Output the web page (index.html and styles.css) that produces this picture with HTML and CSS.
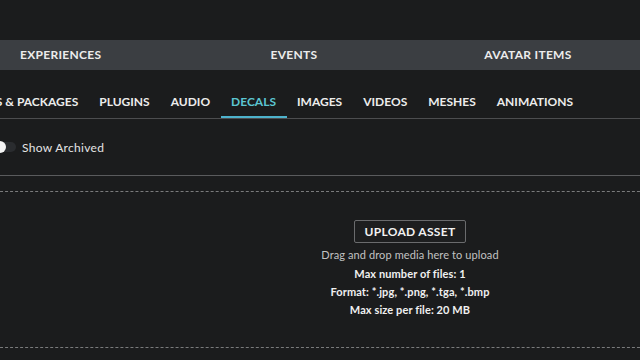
FILE: index.html
```html
<html lang="en">
  <head>
    <meta charset="UTF-8" />
    <meta name="viewport" content="width=device-width, initial-scale=1.0" />
    <title>Creations - Decals</title>
    <link rel="stylesheet" href="styles.css">
  </head>
  <body>
    <div class="top-strip"></div>
    <nav class="category-nav">
      <div class="category">EXPERIENCES</div>
      <div class="category">EVENTS</div>
      <div class="category">AVATAR ITEMS</div>
    </nav>
    <div class="asset-tabs">
      <div class="tab">MODELS &amp; PACKAGES</div>
      <div class="tab">PLUGINS</div>
      <div class="tab">AUDIO</div>
      <div class="tab active">DECALS</div>
      <div class="tab">IMAGES</div>
      <div class="tab">VIDEOS</div>
      <div class="tab">MESHES</div>
      <div class="tab">ANIMATIONS</div>
    </div>
    <div class="filter-row">
      <span class="toggle"><span class="knob"></span></span>
      <span class="filter-label">Show Archived</span>
    </div>
    <div class="dropzone">
      <button class="upload-btn">UPLOAD ASSET</button>
      <p class="hint">Drag and drop media here to upload</p>
      <p class="rule">Max number of files: 1</p>
      <p class="rule">Format: *.jpg, *.png, *.tga, *.bmp</p>
      <p class="rule">Max size per file: 20 MB</p>
    </div>
  </body>
</html>
```

FILE: styles.css
```css
body {
  margin: 0;
  background-color: #1b1c1d;
  font-family: Lato, "Open Sans", sans-serif;
  color: #ececec;
  overflow: hidden;
}

.top-strip {
  height: 40px;
}

.category-nav {
  display: flex;
  height: 30px;
  background-color: #3b3e42;
}

.category {
  flex: none;
  width: 234px;
  line-height: 30px;
  text-align: center;
  font-size: 12px;
  font-weight: 700;
  letter-spacing: 0.3px;
}

.category:first-child {
  width: 177px;
  text-align: left;
  padding-left: 20px;
  box-sizing: border-box;
}

.asset-tabs {
  display: flex;
  align-items: flex-end;
  height: 48px;
  margin-left: -58px;
  border-bottom: 1px solid #4c4d4f;
}

.tab {
  flex: none;
  padding: 0 10.5px;
  line-height: 28px;
  border-bottom: 2px solid transparent;
  font-size: 12px;
  font-weight: 700;
  white-space: nowrap;
}

.tab.active {
  color: #5cc6d2;
  border-bottom-color: #4db2cc;
}

.filter-row {
  display: flex;
  align-items: center;
  height: 56px;
  border-bottom: 1px solid #5a5b5d;
}

.toggle {
  position: relative;
  width: 16px;
  height: 10px;
  border-radius: 0 5px 5px 0;
  background-color: #2a2c2f;
}

.knob {
  position: absolute;
  left: -6px;
  top: -1px;
  width: 12px;
  height: 12px;
  border-radius: 50%;
  background-color: #f4f4f4;
}

.filter-label {
  margin-left: 6px;
  font-size: 12px;
  color: #e4e4e4;
  letter-spacing: 0.3px;
}

.dropzone {
  display: flex;
  flex-direction: column;
  align-items: center;
  height: 157px;
  margin: 15px -20px 0;
  padding: 28px 0 0 180px;
  border: 1px dashed #7a7b7c;
  box-sizing: border-box;
}

.upload-btn {
  height: 23px;
  padding: 0 10px;
  background-color: #1d1e1f;
  border: 1px solid #6a6b6d;
  border-radius: 2px;
  color: #f2f2f2;
  font-family: inherit;
  font-size: 12px;
  font-weight: 700;
  letter-spacing: 0.3px;
}

.hint {
  margin: 4px 0 2px;
  font-size: 11px;
  line-height: 16px;
  color: #c2c2c2;
  letter-spacing: 0.1px;
}

.rule {
  margin: 0;
  font-size: 11px;
  line-height: 18px;
  font-weight: 700;
  color: #f0f0f0;
  letter-spacing: 0.1px;
}
```
